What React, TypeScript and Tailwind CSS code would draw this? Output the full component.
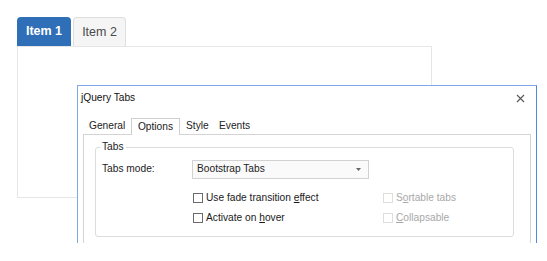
import React from "react";

function Check({ label, disabled }: { label: React.ReactNode; disabled?: boolean }) {
  return (
    <div className="flex items-center h-[12px]">
      <span
        className={
          "w-[10px] h-[10px] border bg-white shrink-0 " +
          (disabled ? "border-[#dedede]" : "border-[#6b6b6b]")
        }
      />
      <span className={"ml-[3px] leading-none " + (disabled ? "text-[#a8a8a8]" : "text-[#1a1a1a]")}>{label}</span>
    </div>
  );
}

export default function App() {
  return (
    <div className="relative w-[547px] h-[261px] bg-white overflow-hidden">
      {/* Bootstrap tabs widget */}
      <div className="pt-[17px] pl-[17px] w-[432px]" style={{ fontFamily: '"Liberation Sans", Arial, sans-serif' }}>
        <div className="flex gap-[2px] h-[29px]">
          <div className="w-[54px] h-[29px] rounded-t-[4px] bg-[#2f6fb7] text-white text-[12.5px] font-semibold flex items-center justify-center">
            Item 1
          </div>
          <div className="w-[53px] h-[29px] rounded-t-[4px] bg-[#f5f5f5] border border-b-0 border-[#dedede] text-[#4a4a4a] text-[12.5px] flex items-center justify-center">
            Item 2
          </div>
        </div>
        <div className="h-[152px] border border-[#e6e6e6] bg-white" />
      </div>

      {/* jQuery Tabs dialog window */}
      <div
        className="absolute left-[77px] top-[85px] w-[460px] h-[158px] bg-white border border-b-0 border-[#7ea8e8] border-r-[#4b8be6] flex flex-col text-[10.2px]"
        style={{ fontFamily: '"Liberation Sans", Arial, sans-serif' }}
      >
        <div className="h-[31px] flex items-start justify-between pt-[7px] pl-[3px] pr-[11px]">
          <span className="text-[#111] leading-none">jQuery Tabs</span>
          <svg width="9" height="9" viewBox="0 0 9 9" className="mt-[1px]">
            <path d="M1 1 L8 8 M8 1 L1 8" stroke="#555" strokeWidth="1.1" />
          </svg>
        </div>
        <div className="px-[5px] flex-1 flex flex-col">
          <div className="flex h-[17px] items-end pl-[1px]">
            <div className="w-[47px] h-[16px] flex items-center pl-[5px] text-[#222]">General</div>
            <div className="relative z-10 w-[49px] h-[17px] -mb-px border border-b-0 border-[#cfcfcf] bg-white flex items-center justify-center text-[#222]">
              Options
            </div>
            <div className="w-[35px] h-[16px] flex items-center pl-[6px] text-[#222]">Style</div>
            <div className="w-[40px] h-[16px] flex items-center pl-[4px] text-[#222]">Events</div>
          </div>
          <div className="flex-1 border border-b-0 border-[#d4d4d4] pt-[12px] pl-[11px] pr-[16px]">
            <div className="relative h-[90px] border border-[#dcdcdc] rounded-[3px] pt-[12px] pl-[6px]">
              <span className="absolute -top-[6px] left-[4px] bg-white px-[2px] leading-none text-[#222]">Tabs</span>
              <div className="flex items-center">
                <span className="w-[90px] text-[#222] leading-none">Tabs mode:</span>
                <div className="w-[177px] h-[19px] border border-[#d2d2d2] bg-[#fafafa] flex items-center justify-between pl-[4px] pr-[7px]">
                  <span className="text-[#222] leading-none">Bootstrap Tabs</span>
                  <svg width="5" height="3" viewBox="0 0 5 3">
                    <path d="M0 0 L5 0 L2.5 3 Z" fill="#666" />
                  </svg>
                </div>
              </div>
              <div className="grid grid-cols-[190px_120px] gap-y-[8px] pl-[91px] mt-[13px]">
                <Check label={<>Use fade transition <u>e</u>ffect</>} />
                <Check disabled label={<>S<u>o</u>rtable tabs</>} />
                <Check label={<>Activate on <u>h</u>over</>} />
                <Check disabled label={<><u>C</u>ollapsable</>} />
              </div>
            </div>
          </div>
        </div>
      </div>
    </div>
  );
}
